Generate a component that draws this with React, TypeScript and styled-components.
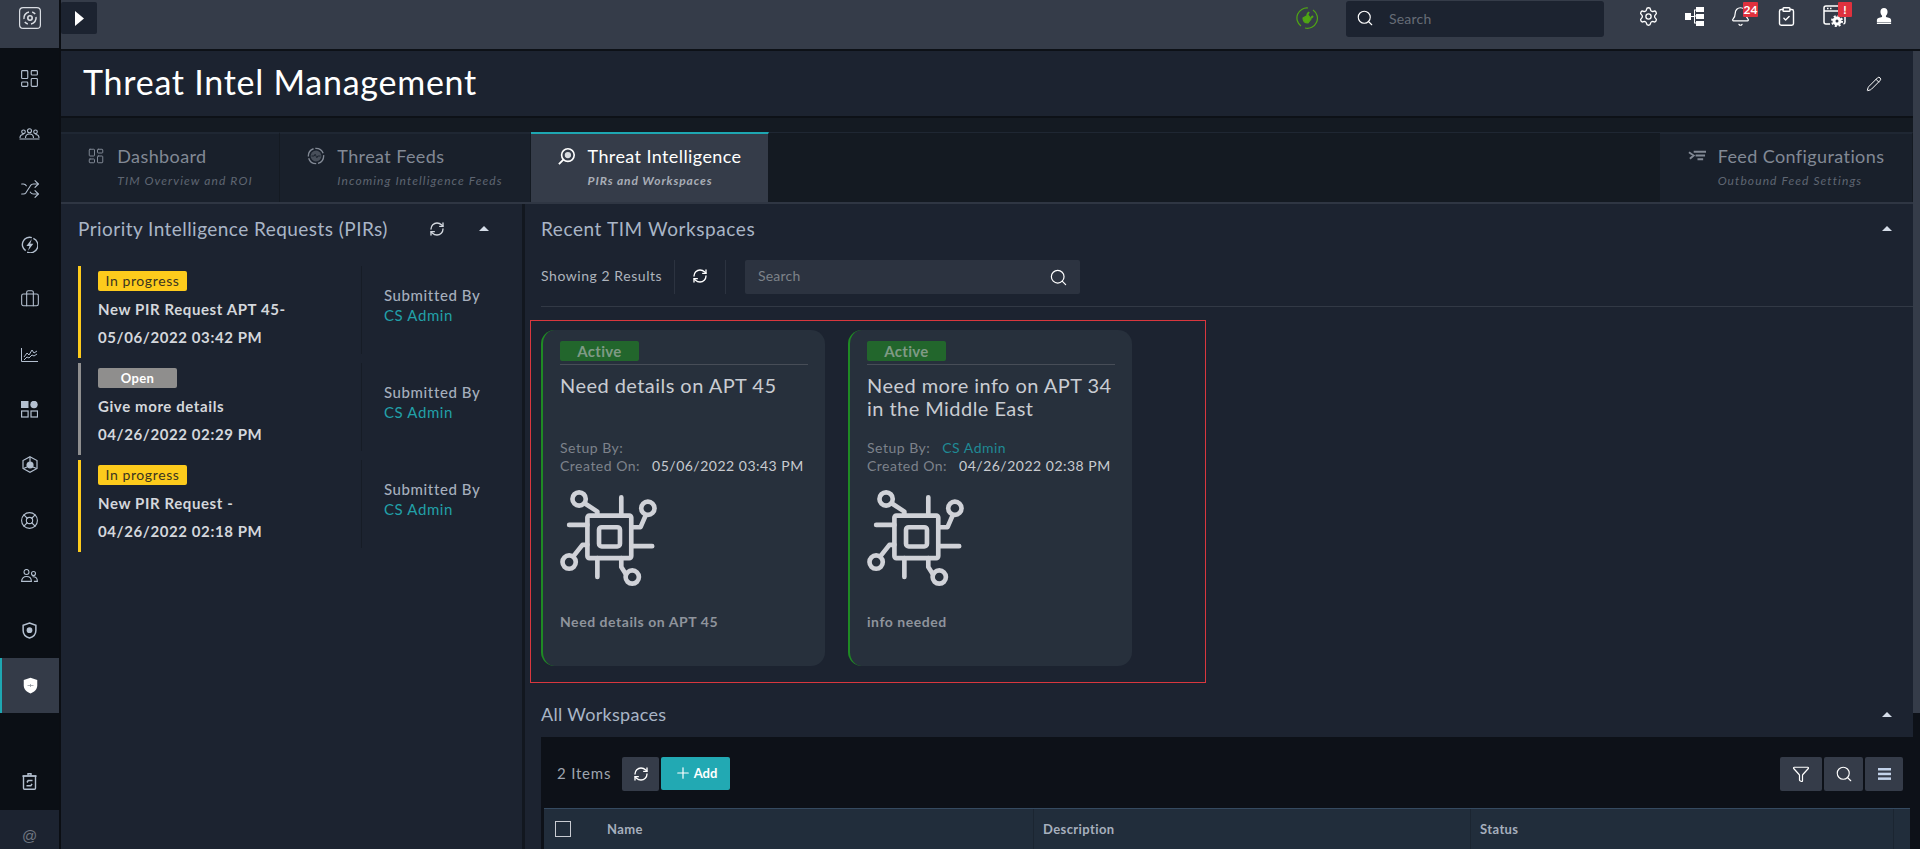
import styled, { createGlobalStyle } from "styled-components";
import {
  Bell,
  Briefcase,
  ClipboardCheck,
  Filter,
  LayoutDashboard,
  LifeBuoy,
  Pencil,
  Plus,
  RefreshCw,
  Search,
  Settings,
  Shuffle,
} from "lucide-react";

const GlobalStyle = createGlobalStyle`
  html, body {
    margin: 0;
    height: 100%;
    overflow: hidden;
    background: #1c2330;
  }
  * {
    box-sizing: border-box;
  }
  body {
    font-family: Lato, "Open Sans", sans-serif;
    color: #c9ccd2;
  }
`;

const Shell = styled.div`
  display: flex;
  width: 1920px;
  height: 849px;
  overflow: hidden;
`;

const Sidebar = styled.nav`
  width: 61px;
  flex: none;
  display: flex;
  flex-direction: column;
  background: #0b0f15;
  border-right: 2px solid #0b0e13;
`;

const Logo = styled.div`
  height: 48px;
  flex: none;
  display: flex;
  align-items: center;
  justify-content: center;
  padding-bottom: 12px;
  background: #343b48;
  color: #d9dde3;
`;

const NavList = styled.div`
  padding-top: 3px;
  display: flex;
  flex-direction: column;
`;

const NavItem = styled.div<{ $active?: boolean }>`
  height: 55.2px;
  flex: none;
  display: flex;
  align-items: center;
  justify-content: center;
  color: ${(p) => (p.$active ? "#ffffff" : "#b4c0d0")};
  background: ${(p) => (p.$active ? "#343b48" : "transparent")};
  border-left: 2px solid ${(p) => (p.$active ? "#1ea7b2" : "transparent")};
  padding-right: ${(p) => (p.$active ? "0" : "2px")};
`;

const TrashItem = styled(NavItem)`
  margin-top: auto;
  margin-bottom: 1px;
`;

const AtItem = styled.div`
  height: 39px;
  flex: none;
  display: flex;
  align-items: center;
  justify-content: center;
  background: #1c2330;
  color: #6f7680;
  font-family: "Liberation Sans", sans-serif;
  font-size: 15px;
  padding-top: 11px;
`;

const Main = styled.div`
  flex: 1;
  min-width: 0;
  display: flex;
  flex-direction: column;
`;

const TopBar = styled.header`
  height: 51px;
  flex: none;
  display: flex;
  align-items: flex-start;
  background: #353c49;
  border-bottom: 2px solid #0d1117;
  padding: 2px 18px 0 0;
`;

const ExpandButton = styled.button`
  width: 36px;
  height: 32px;
  border: none;
  border-radius: 2px;
  background: #1c2330;
  color: #ffffff;
  padding: 0;
  display: flex;
  align-items: center;
  justify-content: center;
`;

const PlugStatus = styled.div`
  margin-left: auto;
  margin-top: 5px;
  width: 22px;
  height: 22px;
  color: #4fa514;
`;

const TopSearch = styled.div`
  width: 258px;
  height: 36px;
  margin-top: -1px;
  margin-left: 28px;
  background: #1c2330;
  border-radius: 3px;
  display: flex;
  align-items: center;
  padding: 0 0 2px 10px;
  gap: 15px;
  color: #ffffff;
  font-size: 14px;
`;

const Placeholder = styled.span`
  color: #666c76;
  font-size: 14px;
  letter-spacing: 0.2px;
`;

const FieldPlaceholder = styled(Placeholder)`
  color: #7d8289;
  padding-bottom: 3px;
`;

const TopIcons = styled.div`
  display: flex;
  margin-left: 26px;
  margin-top: -2px;
  gap: 10px;
`;

const TopIcon = styled.div<{ $nudge?: number }>`
  position: relative;
  width: 36px;
  height: 32px;
  margin-left: ${(p) => p.$nudge ?? 0}px;
  display: flex;
  align-items: center;
  justify-content: center;
  color: #ffffff;
`;

const Counter = styled.span<{ $width: number }>`
  position: absolute;
  top: 2px;
  left: 21px;
  width: ${(p) => p.$width}px;
  height: 15px;
  background: #e0313d;
  border-radius: 1px;
  color: #ffffff;
  font-size: 12px;
  font-weight: 700;
  line-height: 15px;
  text-align: center;
`;

const BodyRow = styled.div`
  flex: 1;
  min-height: 0;
  display: flex;
`;

const Body = styled.div`
  flex: 1;
  min-width: 0;
  display: flex;
  flex-direction: column;
`;

const Track = styled.div`
  width: 7px;
  flex: none;
  background: #0d1118;
`;

const Thumb = styled.div`
  height: 662px;
  background: #353c49;
`;

const PageHeader = styled.div`
  height: 67px;
  flex: none;
  display: flex;
  align-items: center;
  justify-content: space-between;
  padding: 0 31px 0 22px;
  background: #1c2330;
  border-bottom: 2px solid #0d1117;
`;

const PageTitle = styled.h1`
  margin: -4px 0 0;
  font-size: 34px;
  font-weight: 400;
  color: #ffffff;
  letter-spacing: 0.75px;
`;

const EditIcon = styled.span`
  display: flex;
  color: #ffffff;
`;

const TabBar = styled.div`
  height: 86px;
  flex: none;
  display: flex;
  align-items: stretch;
  padding-top: 14px;
  background: #141a22;
  border-bottom: 2px solid #2f3643;
`;

const Tab = styled.div<{ $width: number; $active?: boolean }>`
  width: ${(p) => p.$width}px;
  flex: none;
  display: grid;
  grid-template-columns: 18px auto;
  column-gap: 12px;
  align-content: center;
  justify-content: center;
  padding-bottom: 4px;
  background: ${(p) => (p.$active ? "#353c49" : "#19202b")};
  border-top: 2px solid ${(p) => (p.$active ? "#1ea7b2" : "#1f2733")};
  border-right: 1px solid #141a22;
  color: ${(p) => (p.$active ? "#ffffff" : "#828995")};
`;

const TabSpacer = styled.div`
  flex: 1;
  border-top: 1px solid #1f2733;
`;

const TabIcon = styled.span`
  display: flex;
  align-items: center;
  justify-content: center;
`;

const TabTitle = styled.span`
  font-size: 18px;
  line-height: 22px;
  letter-spacing: 0.4px;
  white-space: nowrap;
`;

const TabSub = styled.span<{ $active?: boolean }>`
  grid-column: 2;
  margin-top: 7px;
  font-size: 12px;
  line-height: 14px;
  font-style: italic;
  letter-spacing: ${(p) => (p.$active ? 0.9 : 1.1)}px;
  white-space: nowrap;
  color: ${(p) => (p.$active ? "#a9aeb7" : "#5f6672")};
  font-weight: ${(p) => (p.$active ? 700 : 400)};
`;

const Content = styled.div`
  flex: 1;
  min-height: 0;
  display: flex;
`;

const LeftPanel = styled.section`
  width: 464px;
  flex: none;
  border-right: 3px solid #12171f;
  padding: 0 17px;
`;

const PanelHead = styled.div`
  height: 52px;
  padding-bottom: 3px;
  display: flex;
  align-items: center;
  color: #a9b5c6;
`;

const PanelTitle = styled.h2`
  margin: 0;
  font-size: 19px;
  font-weight: 400;
  letter-spacing: 0.45px;
  white-space: nowrap;
`;

const PanelActions = styled.div`
  display: flex;
  align-items: center;
  margin-left: 41px;
  gap: 34px;
  color: #d3d8df;
`;

const Caret = styled.span`
  width: 0;
  height: 0;
  border-left: 5px solid transparent;
  border-right: 5px solid transparent;
  border-bottom: 5px solid #d5dde8;
`;

const PirList = styled.div`
  margin-top: 10px;
  display: flex;
  flex-direction: column;
  gap: 5px;
  width: 427px;
`;

const PirRow = styled.div<{ $color: string }>`
  height: 92px;
  display: flex;
  border-left: 3px solid ${(p) => p.$color};
`;

const PirMain = styled.div`
  width: 281px;
  padding: 5px 0 0 17px;
  margin-bottom: 4px;
  border-right: 1px solid #161c26;
`;

const PirBadge = styled.div<{ $color: string; $text: string; $width: number; $bold?: boolean }>`
  width: ${(p) => p.$width}px;
  height: 20px;
  border-radius: 2px;
  background: ${(p) => p.$color};
  color: ${(p) => p.$text};
  font-size: ${(p) => (p.$bold ? 13 : 14)}px;
  line-height: 20px;
  text-align: center;
  letter-spacing: ${(p) => (p.$bold ? 0.4 : 0.6)}px;
  font-weight: ${(p) => (p.$bold ? 700 : 400)};
`;

const PirTitle = styled.div`
  margin-top: 8px;
  font-size: 15px;
  line-height: 20px;
  font-weight: 700;
  color: #d4d7dc;
  letter-spacing: 0.6px;
  white-space: nowrap;
`;

const PirDate = styled(PirTitle)`
  margin-top: 8px;
`;

const PirSide = styled.div`
  padding: 19px 0 0 22px;
  font-size: 15px;
  line-height: 20px;
  letter-spacing: 0.6px;
  color: #a6afbd;
  font-weight: 500;
  white-space: nowrap;
`;

const AdminLink = styled.div`
  color: #22a0a8;
  font-weight: 400;
`;

const RightPanel = styled.section`
  flex: 1;
  min-width: 0;
  display: flex;
  flex-direction: column;
`;

const SectionHead = styled.div<{ $height: number; $top?: number; $bottom?: number }>`
  height: ${(p) => p.$height}px;
  flex: none;
  display: flex;
  align-items: center;
  justify-content: space-between;
  padding: ${(p) => p.$top ?? 0}px 21px ${(p) => p.$bottom ?? 0}px 16px;
  color: #a9b5c6;
`;

const SectionTitle = styled.h2<{ $large?: boolean }>`
  margin: 0;
  font-size: ${(p) => (p.$large ? 19 : 18)}px;
  font-weight: 400;
  letter-spacing: ${(p) => (p.$large ? 0.58 : 0.3)}px;
`;

const ResultBar = styled.div`
  margin: 4px 0 0 16px;
  padding-bottom: 12px;
  display: flex;
  align-items: center;
  border-bottom: 1px solid #323945;
  height: 47px;
  color: #aeb4bd;
  font-size: 14px;
  flex: none;
`;

const ResultCount = styled.span`
  width: 134px;
  height: 34px;
  padding-bottom: 3px;
  display: flex;
  align-items: center;
  border-right: 1px solid #2c3340;
  letter-spacing: 0.55px;
`;

const ResultRefresh = styled.span`
  width: 51px;
  height: 34px;
  padding-bottom: 2px;
  display: flex;
  align-items: center;
  justify-content: center;
  border-right: 1px solid #2c3340;
  color: #ffffff;
`;

const ResultSearch = styled.div`
  width: 335px;
  height: 34px;
  margin-left: 19px;
  background: #2c3340;
  border-radius: 2px;
  display: flex;
  align-items: center;
  justify-content: space-between;
  padding: 0 12px 0 13px;
  color: #ffffff;
`;

const HighlightBox = styled.div`
  width: 676px;
  height: 363px;
  margin: 13px 0 0 5px;
  padding: 9px 0 0 10px;
  border: 1px solid #d9373e;
  display: flex;
  gap: 23px;
  flex: none;
`;

const Card = styled.article`
  width: 284px;
  height: 336px;
  flex: none;
  padding: 11px 17px 0 17px;
  background: #27303c;
  border-left: 2px solid #1f8a24;
  border-radius: 14px;
`;

const ActiveBadge = styled.div`
  width: 79px;
  height: 20px;
  border-radius: 2px;
  background: #22662c;
  color: #7f9a85;
  font-size: 15px;
  font-weight: 700;
  line-height: 20px;
  text-align: center;
  letter-spacing: 0.3px;
`;

const CardRule = styled.div`
  height: 1px;
  margin-top: 3px;
  background: #474d57;
`;

const CardTitle = styled.h3`
  margin: 9px 0 0;
  height: 65px;
  font-size: 20px;
  line-height: 23px;
  font-weight: 400;
  color: #c9ccd2;
  letter-spacing: 0.45px;
`;

const MetaLine = styled.div`
  display: flex;
  gap: 12px;
  font-size: 14px;
  line-height: 18px;
  letter-spacing: 0.5px;
  white-space: nowrap;
`;

const MetaLabel = styled.span`
  color: #7d828b;
`;

const MetaValue = styled.span`
  color: #c8cbd0;
`;

const MetaLink = styled.span`
  color: #1f8a95;
`;

const ChipArt = styled.svg`
  display: block;
  margin: 14px 0 0 -1px;
  width: 100px;
  height: 98px;
`;

const CardText = styled.p`
  margin: 26px 0 0;
  font-size: 14px;
  line-height: 18px;
  font-weight: 700;
  color: #8f949c;
  letter-spacing: 0.55px;
`;

const TablePanel = styled.div`
  flex: 1;
  margin-left: 16px;
  background: #0d1118;
`;

const TableTools = styled.div`
  height: 71px;
  padding: 20px 10px 0 16px;
  display: flex;
  align-items: flex-start;
  color: #9fa5ae;
  font-size: 15px;
`;

const ItemCount = styled.span`
  line-height: 32px;
  width: 65px;
  letter-spacing: 0.8px;
`;

const ToolButton = styled.button<{ $width: number }>`
  width: ${(p) => p.$width}px;
  height: 34px;
  border: none;
  border-radius: 2px;
  background: #353c49;
  color: #ffffff;
  padding: 0;
  display: flex;
  align-items: center;
  justify-content: center;
`;

const AddButton = styled.button`
  width: 69px;
  height: 33px;
  margin-left: 2px;
  border: none;
  border-radius: 2px;
  background: #22a9b3;
  color: #ffffff;
  font-family: inherit;
  font-size: 13px;
  font-weight: 700;
  display: flex;
  align-items: center;
  justify-content: center;
  gap: 2px;
  padding: 0 0 2px;
`;

const ToolGroup = styled.div`
  margin-left: auto;
  display: flex;
  gap: 2px;
`;

const TableHead = styled.div`
  height: 41px;
  margin: 0 3px;
  display: grid;
  grid-template-columns: 490px 437px 423px 1fr;
  background: #212d3b;
  border-top: 1px solid #354a60;
  color: #a6afbd;
  font-size: 13px;
  font-weight: 700;
  letter-spacing: 0.4px;
`;

const HeadCell = styled.div`
  display: flex;
  align-items: center;
  padding-left: 9px;
  border-right: 1px solid #1b2531;
`;

const FirstHeadCell = styled(HeadCell)`
  padding-left: 11px;
  gap: 36px;
`;

const CheckBox = styled.span`
  width: 16px;
  height: 16px;
  border: 1px solid #c9ccd2;
`;

const GroupIcon = () => (
  <svg width="21" height="12" viewBox="0 0 21 12" fill="none" stroke="currentColor" strokeWidth="1.100">
    <circle cx="10.500" cy="2.800" r="2" />
    <circle cx="4.500" cy="3.800" r="1.800" />
    <circle cx="16.500" cy="3.800" r="1.800" />
    <path d="M6.500 10c0-2.500 1.500-4 4-4s4 1.500 4 4M1 10c0-2 1.300-3.500 3.500-3.500M20 10c0-2-1.300-3.500-3.500-3.500M.5 11h20" />
  </svg>
);

const BoltIcon = () => (
  <svg width="17" height="17" viewBox="0 0 22 22" fill="none" stroke="currentColor" strokeWidth="1.800">
    <path d="M6 19a9.500 9.500 0 0 1 8-17M16 3a9.500 9.500 0 0 1-8 18" />
    <path d="M14 4l-7 9h4l-2 6 7-9h-4z" fill="currentColor" stroke="none" />
  </svg>
);

const ChartIcon = () => (
  <svg width="17" height="14" viewBox="0 0 17 14" fill="none" stroke="currentColor" strokeWidth="1">
    <path d="M.5 0v13.500H17" />
    <path d="M3 9l3-4 2 2 3-5 2 3 3-2M3 12l3-3 2 1 3-3 2 1 3-2" />
  </svg>
);

const AppsIcon = () => (
  <svg width="17" height="17" viewBox="0 0 17 17" fill="none" stroke="currentColor" strokeWidth="1.200">
    <rect x="0" y="0" width="7.500" height="7" fill="currentColor" stroke="none" />
    <circle cx="13" cy="3.500" r="3.700" fill="currentColor" stroke="none" />
    <rect x="0.600" y="10" width="6.500" height="6" />
    <rect x="10" y="10" width="6.500" height="6" />
  </svg>
);

const HexIcon = () => (
  <svg width="16" height="17" viewBox="0 0 16 17" fill="none" stroke="currentColor" strokeWidth="1.200">
    <path d="M8 .8l7 3.700v8L8 16.200 1 12.500v-8z" />
    <circle cx="8" cy="9" r="3" fill="currentColor" />
    <path d="M8 1v5M1.500 12.500L5 11M14.500 12.500L11 11" />
  </svg>
);

const PeopleIcon = () => (
  <svg width="17" height="13" viewBox="0 0 17 13" fill="none" stroke="currentColor" strokeWidth="1.100">
    <circle cx="5.500" cy="3" r="2.500" />
    <circle cx="12.500" cy="4.500" r="2" />
    <path d="M.6 12.400c0-3 2-4.900 4.900-4.900s4.900 1.900 4.900 4.900zM11.500 7.800c3-.4 4.900 1.300 4.900 4.600h-3.500" />
  </svg>
);

const ShieldDotIcon = () => (
  <svg width="15" height="17" viewBox="0 0 20 22" fill="none" stroke="currentColor" strokeWidth="2">
    <path d="M10 1l8.500 3v7c0 5-3.500 8.500-8.500 10C5 19.500 1.500 16 1.500 11V4z" />
    <circle cx="10" cy="10.500" r="3.800" fill="currentColor" stroke="none" />
  </svg>
);

const ShieldSolidIcon = () => (
  <svg width="15" height="17" viewBox="0 0 20 22">
    <path d="M10 .5l9 3v7.500c0 5-3.500 8.500-9 10.500C4.500 19.500 1 16 1 11V3.500z" fill="#ffffff" />
    <path d="M6 11h8M10 9v4" stroke="#8d939c" strokeWidth="1" />
  </svg>
);

const TrashIcon = () => (
  <svg width="15" height="17" viewBox="0 0 15 17" fill="none" stroke="currentColor" strokeWidth="1.400">
    <path d="M.5 3h14" strokeWidth="1.800" />
    <path d="M6 2.500V.8h3v1.700" />
    <path d="M1.500 3v12.300a1 1 0 0 0 1 1h10a1 1 0 0 0 1-1V3" />
    <path d="M10.500 7.500H6.200L5 9.500M4.500 12.800h4.300l1.200-2" strokeWidth="1.500" />
  </svg>
);

const LogoIcon = () => (
  <svg width="22" height="22" viewBox="0 0 22 22" fill="none" stroke="currentColor" strokeWidth="1.200">
    <rect x="0.600" y="0.600" width="20.800" height="20.800" rx="3.500" />
    <circle cx="11" cy="11" r="2.200" strokeWidth="1.600" />
    <path d="M5 12a6 6 0 0 1 5-7M17 10a6 6 0 0 1-5 7M5.800 15a6.500 6.500 0 0 0 3 2M16.200 7a6.500 6.500 0 0 0-3-2" strokeWidth="1.500" />
  </svg>
);

const PlayIcon = () => (
  <svg width="9" height="15" viewBox="0 0 9 15">
    <path d="M0 0l9 7.500L0 15z" fill="currentColor" />
  </svg>
);

const PlugIcon = () => (
  <svg viewBox="0 0 22 22" width="22" height="22" fill="none" stroke="currentColor" strokeWidth="1.200">
    <path d="M5 19A10 10 0 0 1 12 1M17 3a10 10 0 0 1-8 18" />
    <path d="M7 11l5-3 3 4-3 4c-3 0-5-2-5-5z" fill="currentColor" />
    <path d="M11 8l2-3M15 11l2-2" strokeWidth="2" />
  </svg>
);

const HierarchyIcon = () => (
  <svg width="19" height="19" viewBox="0 0 19 19" fill="#ffffff">
    <rect x="0" y="6" width="6" height="7" />
    <rect x="11" y="0" width="8" height="5" />
    <rect x="11" y="7" width="8" height="5" />
    <rect x="11" y="14" width="8" height="5" />
    <path d="M6 9h3V2.500h2v1H10v5h1v1H10v6h1v1H9V10H6z" />
  </svg>
);

const WindowGearIcon = () => (
  <svg width="24" height="22" viewBox="0 0 24 22" fill="none" stroke="#ffffff" strokeWidth="1.500">
    <path d="M7 19H3a2 2 0 0 1-2-2V3a2 2 0 0 1 2-2h17a2 2 0 0 1 2 2v14a2 2 0 0 1-1.500 2" />
    <path d="M1 6h21" />
    <path d="M4 3.500h5" strokeDasharray="1.500 1.500" />
    <circle cx="14" cy="16" r="3" strokeWidth="3" />
    <circle cx="14" cy="16" r="5" strokeWidth="2" strokeDasharray="2 1.930" />
  </svg>
);

const UserIcon = () => (
  <svg width="16" height="16" viewBox="0 0 18 18" fill="#ffffff">
    <path d="M9 0c2.500 0 4 1.800 4 4.200 0 2-.8 3.500-1.800 4.500v1.500c3 .5 5.800 1.500 5.800 3.300V16H1v-2.500c0-1.800 2.800-2.800 5.800-3.300V8.700C5.800 7.700 5 6.200 5 4.200 5 1.800 6.500 0 9 0z" />
    <rect x="1" y="16.500" width="16" height="1.500" />
  </svg>
);

const FeedsIcon = () => (
  <svg width="20" height="20" viewBox="0 0 20 20" fill="none" stroke="currentColor" strokeWidth="1.500">
    <circle cx="10" cy="10" r="8.500" strokeDasharray="11 2" />
    <circle cx="10" cy="10" r="6" fill="currentColor" fillOpacity="0.450" stroke="none" />
    <path d="M5 10h3l1-2 2 4 1-2h3" strokeWidth="1" stroke="#19202b" />
  </svg>
);

const IntelIcon = () => (
  <svg width="20" height="20" viewBox="0 0 20 20" fill="none" stroke="#ffffff" strokeWidth="1.800">
    <circle cx="11" cy="9" r="7" />
    <circle cx="11" cy="9" r="3.500" fill="#d8dbe0" stroke="none" />
    <path d="M6 14l-5 5" strokeWidth="2" />
  </svg>
);

const FeedConfigIcon = () => (
  <svg width="19" height="11" viewBox="0 0 19 11" fill="none" stroke="currentColor" strokeWidth="2">
    <path d="M6 1.500h13M8 5.500h10M10 9.500h6M1 2l5 3.500L2 9" />
  </svg>
);

const MenuIcon = () => (
  <svg width="13" height="12" viewBox="0 0 13 12" fill="#c3d3ea">
    <rect width="13" height="2.500" />
    <rect y="4.700" width="13" height="2.500" />
    <rect y="9.400" width="13" height="2.500" />
  </svg>
);

const ChipIcon = () => (
  <ChipArt viewBox="85 510 300 295" fill="none" stroke="#d0d2d8" strokeWidth="14" strokeLinecap="round" strokeLinejoin="round">
    <rect x="170" y="590" width="132" height="128" rx="6" />
    <rect x="205" y="625" width="63" height="58" rx="8" />
    <path d="M272 535v55M200 718v57M115 618h55M302 682h63" />
    <circle cx="145" cy="540" r="20" />
    <path d="M165 555l35 23v12" />
    <circle cx="352" cy="568" r="20" />
    <path d="M345 590l-15 35h-28" />
    <circle cx="115" cy="730" r="20" />
    <path d="M130 710l25-32h15" />
    <circle cx="305" cy="775" r="20" />
    <path d="M285 765l-13-20v-27" />
  </ChipArt>
);

const navItems = [
  <LayoutDashboard size={21} strokeWidth={1.3} />,
  <GroupIcon />,
  <Shuffle size={20} strokeWidth={1.3} />,
  <BoltIcon />,
  <Briefcase size={20} strokeWidth={1.3} />,
  <ChartIcon />,
  <AppsIcon />,
  <HexIcon />,
  <LifeBuoy size={19} strokeWidth={1.4} />,
  <PeopleIcon />,
  <ShieldDotIcon />,
];

const pirs = [
  { status: "In progress", title: "New PIR Request APT 45-", date: "05/06/2022 03:42 PM" },
  { status: "Open", title: "Give more details", date: "04/26/2022 02:29 PM" },
  { status: "In progress", title: "New PIR Request -", date: "04/26/2022 02:18 PM" },
];

const workspaces = [
  {
    title: "Need details on APT 45",
    setupBy: "",
    created: "05/06/2022 03:43 PM",
    text: "Need details on APT 45",
  },
  {
    title: "Need more info on APT 34 in the Middle East",
    setupBy: "CS Admin",
    created: "04/26/2022 02:38 PM",
    text: "info needed",
  },
];

export default function App() {
  return (
    <Shell>
      <GlobalStyle />
      <Sidebar>
        <Logo>
          <LogoIcon />
        </Logo>
        <NavList>
          {navItems.map((icon, i) => (
            <NavItem key={i}>{icon}</NavItem>
          ))}
          <NavItem $active>
            <ShieldSolidIcon />
          </NavItem>
        </NavList>
        <TrashItem>
          <TrashIcon />
        </TrashItem>
        <AtItem>@</AtItem>
      </Sidebar>

      <Main>
        <TopBar>
          <ExpandButton>
            <PlayIcon />
          </ExpandButton>
          <PlugStatus>
            <PlugIcon />
          </PlugStatus>
          <TopSearch>
            <Search size={18} strokeWidth={1.5} />
            <Placeholder>Search</Placeholder>
          </TopSearch>
          <TopIcons>
            <TopIcon>
              <Settings size={21} strokeWidth={1.5} />
            </TopIcon>
            <TopIcon>
              <HierarchyIcon />
            </TopIcon>
            <TopIcon>
              <Bell size={21} strokeWidth={1.4} />
              <Counter $width={15}>24</Counter>
            </TopIcon>
            <TopIcon>
              <ClipboardCheck size={21} strokeWidth={1.6} />
            </TopIcon>
            <TopIcon $nudge={3}>
              <WindowGearIcon />
              <Counter $width={14}>!</Counter>
            </TopIcon>
            <TopIcon $nudge={3}>
              <UserIcon />
            </TopIcon>
          </TopIcons>
        </TopBar>

        <BodyRow>
          <Body>
            <PageHeader>
              <PageTitle>Threat Intel Management</PageTitle>
              <EditIcon>
                <Pencil size={16} strokeWidth={1.5} />
              </EditIcon>
            </PageHeader>

            <TabBar>
              <Tab $width={219}>
                <TabIcon>
                  <LayoutDashboard size={22} strokeWidth={1.3} />
                </TabIcon>
                <TabTitle>Dashboard</TabTitle>
                <TabSub>TIM Overview and ROI</TabSub>
              </Tab>
              <Tab $width={251}>
                <TabIcon>
                  <FeedsIcon />
                </TabIcon>
                <TabTitle>Threat Feeds</TabTitle>
                <TabSub>Incoming Intelligence Feeds</TabSub>
              </Tab>
              <Tab $width={238} $active>
                <TabIcon>
                  <IntelIcon />
                </TabIcon>
                <TabTitle>Threat Intelligence</TabTitle>
                <TabSub $active>PIRs and Workspaces</TabSub>
              </Tab>
              <TabSpacer />
              <Tab $width={253}>
                <TabIcon>
                  <FeedConfigIcon />
                </TabIcon>
                <TabTitle>Feed Configurations</TabTitle>
                <TabSub>Outbound Feed Settings</TabSub>
              </Tab>
            </TabBar>

            <Content>
              <LeftPanel>
                <PanelHead>
                  <PanelTitle>Priority Intelligence Requests (PIRs)</PanelTitle>
                  <PanelActions>
                    <RefreshCw size={16} strokeWidth={2} />
                    <Caret />
                  </PanelActions>
                </PanelHead>
                <PirList>
                  {pirs.map((pir) => {
                    const open = pir.status === "Open";
                    return (
                      <PirRow key={pir.date} $color={open ? "#8f8f8f" : "#fdcb1c"}>
                        <PirMain>
                          <PirBadge
                            $color={open ? "#8f8e8d" : "#fdcb1c"}
                            $text={open ? "#ffffff" : "#3a3520"}
                            $width={open ? 79 : 89}
                            $bold={open}
                          >
                            {pir.status}
                          </PirBadge>
                          <PirTitle>{pir.title}</PirTitle>
                          <PirDate>{pir.date}</PirDate>
                        </PirMain>
                        <PirSide>
                          Submitted By
                          <AdminLink>CS Admin</AdminLink>
                        </PirSide>
                      </PirRow>
                    );
                  })}
                </PirList>
              </LeftPanel>

              <RightPanel>
                <SectionHead $height={52} $bottom={4}>
                  <SectionTitle $large>Recent TIM Workspaces</SectionTitle>
                  <Caret />
                </SectionHead>
                <ResultBar>
                  <ResultCount>Showing 2 Results</ResultCount>
                  <ResultRefresh>
                    <RefreshCw size={16} strokeWidth={2} />
                  </ResultRefresh>
                  <ResultSearch>
                    <FieldPlaceholder>Search</FieldPlaceholder>
                    <Search size={19} strokeWidth={1.5} />
                  </ResultSearch>
                </ResultBar>

                <HighlightBox>
                  {workspaces.map((ws) => (
                    <Card key={ws.created}>
                      <ActiveBadge>Active</ActiveBadge>
                      <CardRule />
                      <CardTitle>{ws.title}</CardTitle>
                      <MetaLine>
                        <MetaLabel>Setup By:</MetaLabel>
                        <MetaLink>{ws.setupBy}</MetaLink>
                      </MetaLine>
                      <MetaLine>
                        <MetaLabel>Created On:</MetaLabel>
                        <MetaValue>{ws.created}</MetaValue>
                      </MetaLine>
                      <ChipIcon />
                      <CardText>{ws.text}</CardText>
                    </Card>
                  ))}
                </HighlightBox>

                <SectionHead $height={54} $top={8}>
                  <SectionTitle>All Workspaces</SectionTitle>
                  <Caret />
                </SectionHead>

                <TablePanel>
                  <TableTools>
                    <ItemCount>2 Items</ItemCount>
                    <ToolButton $width={37}>
                      <RefreshCw size={16} strokeWidth={2} />
                    </ToolButton>
                    <AddButton>
                      <Plus size={18} strokeWidth={1.6} />
                      Add
                    </AddButton>
                    <ToolGroup>
                      <ToolButton $width={42}>
                        <Filter size={18} strokeWidth={1.6} />
                      </ToolButton>
                      <ToolButton $width={39}>
                        <Search size={18} strokeWidth={1.5} />
                      </ToolButton>
                      <ToolButton $width={38}>
                        <MenuIcon />
                      </ToolButton>
                    </ToolGroup>
                  </TableTools>
                  <TableHead>
                    <FirstHeadCell>
                      <CheckBox />
                      Name
                    </FirstHeadCell>
                    <HeadCell>Description</HeadCell>
                    <HeadCell>Status</HeadCell>
                    <div />
                  </TableHead>
                </TablePanel>
              </RightPanel>
            </Content>
          </Body>
          <Track>
            <Thumb />
          </Track>
        </BodyRow>
      </Main>
    </Shell>
  );
}
